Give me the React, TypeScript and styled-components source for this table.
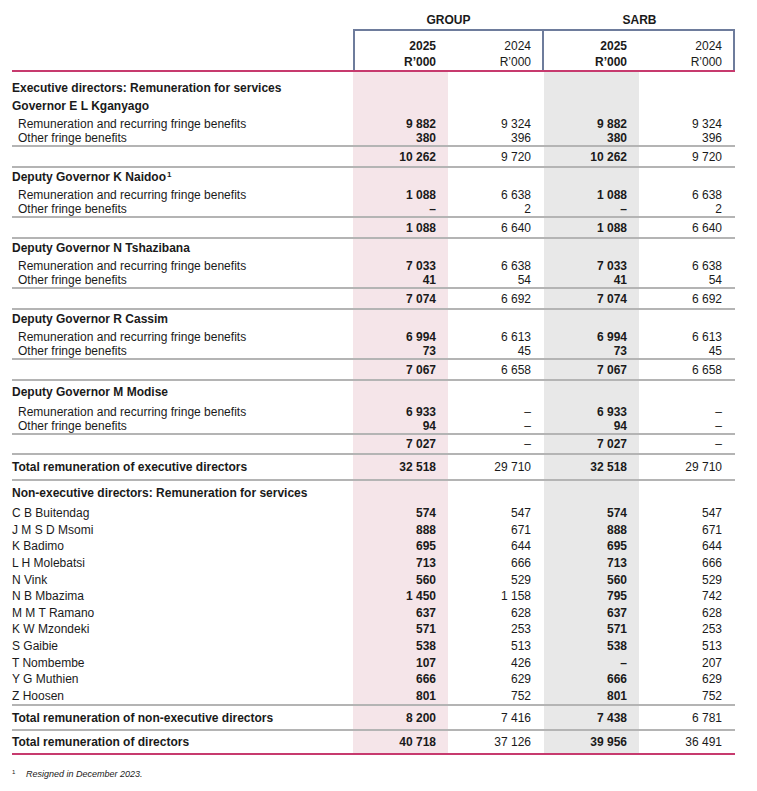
import React from 'react';
import styled, { createGlobalStyle } from 'styled-components';

const GlobalStyle = createGlobalStyle`
  html, body { margin: 0; padding: 0; background: #ffffff; }
  body {
    font-family: "Liberation Sans", Arial, Helvetica, sans-serif;
    color: #1a1a1a;
    font-size: 12px;
  }
`;

const COLS = '341px 95px 96px 95px 96px';

type Tone = 'pink' | 'grey' | 'none';
type Rule = 'grey' | 'pink' | undefined;

const Page = styled.div`
  padding-left: 12px;
  width: 723px;
`;

const Row = styled.div<{ $h: number; $rule?: Rule }>`
  display: grid;
  grid-template-columns: ${COLS};
  height: ${(p) => p.$h}px;
  border-bottom: ${(p) =>
    p.$rule === 'grey' ? '2px solid #b4b4b4' : p.$rule === 'pink' ? '2px solid #c73a6e' : 'none'};
`;

const GroupLabel = styled.div<{ $span: string }>`
  grid-column: ${(p) => p.$span};
  display: flex;
  align-items: center;
  justify-content: center;
  padding-top: 10px;
  font-weight: 700;
  font-size: 12px;
`;

const YearCell = styled.div<{ $bold: boolean; $left?: boolean; $right?: boolean; $pr: number }>`
  display: flex;
  flex-direction: column;
  justify-content: flex-end;
  align-items: flex-end;
  border-top: 2px solid #6e7c9c;
  border-left: ${(p) => (p.$left ? '2px solid #6e7c9c' : 'none')};
  border-right: ${(p) => (p.$right ? '2px solid #6e7c9c' : 'none')};
  padding-right: ${(p) => p.$pr}px;
  font-weight: ${(p) => (p.$bold ? 700 : 400)};
  line-height: 16px;
`;

const Label = styled.div<{ $bold?: boolean; $indent?: number; $padTop?: number }>`
  display: flex;
  align-items: center;
  padding-left: ${(p) => p.$indent ?? 0}px;
  padding-top: ${(p) => p.$padTop ?? 0}px;
  font-weight: ${(p) => (p.$bold ? 700 : 400)};
  white-space: nowrap;
  sup {
    font-size: 8px;
    line-height: 0;
    margin-left: 1px;
    position: relative;
    top: -2px;
  }
`;

const Value = styled.div<{ $tone: Tone; $bold: boolean; $pr: number; $padTop?: number }>`
  display: flex;
  align-items: center;
  justify-content: flex-end;
  padding-right: ${(p) => p.$pr}px;
  padding-top: ${(p) => p.$padTop ?? 0}px;
  font-weight: ${(p) => (p.$bold ? 700 : 400)};
  background: ${(p) => (p.$tone === 'pink' ? '#f5e5e9' : p.$tone === 'grey' ? '#e8e8e8' : 'transparent')};
`;

const Footnote = styled.div`
  display: flex;
  align-items: flex-start;
  margin-top: 13px;
  padding-left: 12px;
  font-size: 9px;
  line-height: 12px;
`;

const FootMark = styled.span`
  font-size: 6px;
  line-height: 8px;
  width: 14px;
`;

const FootText = styled.span`
  font-style: italic;
`;

const COLSPEC: { tone: Tone; bold: boolean; pr: number }[] = [
  { tone: 'pink', bold: true, pr: 12 },
  { tone: 'none', bold: false, pr: 13 },
  { tone: 'grey', bold: true, pr: 12 },
  { tone: 'none', bold: false, pr: 13 },
];

type RowProps = {
  h: number;
  label?: React.ReactNode;
  values?: string[];
  bold?: boolean;
  indent?: number;
  padTop?: number;
  rule?: Rule;
};

function DataRow({ h, label, values, bold, indent, padTop, rule }: RowProps) {
  return (
    <Row $h={h} $rule={rule}>
      <Label $bold={bold} $indent={indent} $padTop={padTop}>
        {label}
      </Label>
      {COLSPEC.map((c, i) => (
        <Value key={i} $tone={c.tone} $bold={c.bold} $pr={c.pr} $padTop={padTop}>
          {values ? values[i] : ''}
        </Value>
      ))}
    </Row>
  );
}

type Section = {
  name: React.ReactNode;
  remun: string[];
  other: string[];
  total: string[];
  headH?: number;
  headPad?: number;
  gap?: number;
  totalH?: number;
};

const sections: Section[] = [
  {
    name: 'Governor E L Kganyago',
    remun: ['9 882', '9 324', '9 882', '9 324'],
    other: ['380', '396', '380', '396'],
    total: ['10 262', '9 720', '10 262', '9 720'],
  },
  {
    name: (
      <>
        Deputy Governor K Naidoo<sup>1</sup>
      </>
    ),
    remun: ['1 088', '6 638', '1 088', '6 638'],
    other: ['–', '2', '–', '2'],
    total: ['1 088', '6 640', '1 088', '6 640'],
  },
  {
    name: 'Deputy Governor N Tshazibana',
    remun: ['7 033', '6 638', '7 033', '6 638'],
    other: ['41', '54', '41', '54'],
    total: ['7 074', '6 692', '7 074', '6 692'],
  },
  {
    name: 'Deputy Governor R Cassim',
    remun: ['6 994', '6 613', '6 994', '6 613'],
    other: ['73', '45', '73', '45'],
    total: ['7 067', '6 658', '7 067', '6 658'],
  },
  {
    name: 'Deputy Governor M Modise',
    remun: ['6 933', '–', '6 933', '–'],
    other: ['94', '–', '94', '–'],
    total: ['7 027', '–', '7 027', '–'],
    headH: 19,
    headPad: 2,
    gap: 5,
    totalH: 18,
  },
];

const nonExec: [string, string[]][] = [
  ['C B Buitendag', ['574', '547', '574', '547']],
  ['J M S D Msomi', ['888', '671', '888', '671']],
  ['K Badimo', ['695', '644', '695', '644']],
  ['L H Molebatsi', ['713', '666', '713', '666']],
  ['N Vink', ['560', '529', '560', '529']],
  ['N B Mbazima', ['1 450', '1 158', '795', '742']],
  ['M M T Ramano', ['637', '628', '637', '628']],
  ['K W Mzondeki', ['571', '253', '571', '253']],
  ['S Gaibie', ['538', '513', '538', '513']],
  ['T Nombembe', ['107', '426', '–', '207']],
  ['Y G Muthien', ['666', '629', '666', '629']],
  ['Z Hoosen', ['801', '752', '801', '752']],
];

function ExecSection({ s }: { s: Section }) {
  return (
    <>
      <DataRow h={s.headH ?? 17} label={s.name} bold padTop={s.headPad} />
      <DataRow h={s.gap ?? 3} />
      <DataRow h={14} indent={6} label="Remuneration and recurring fringe benefits" values={s.remun} />
      <DataRow h={14} indent={6} label="Other fringe benefits" values={s.other} rule="grey" />
      <DataRow h={s.totalH ?? 19} values={s.total} rule="grey" />
    </>
  );
}

export default function App() {
  return (
    <>
      <GlobalStyle />
      <Page>
        <Row $h={29}>
          <div />
          <GroupLabel $span="2 / 4">GROUP</GroupLabel>
          <GroupLabel $span="4 / 6">SARB</GroupLabel>
        </Row>
        <Row $h={41} $rule="pink">
          <div />
          <YearCell $bold $left $pr={12}>
            <span>2025</span>
            <span>R’000</span>
          </YearCell>
          <YearCell $bold={false} $right $pr={11}>
            <span>2024</span>
            <span>R’000</span>
          </YearCell>
          <YearCell $bold $pr={12}>
            <span>2025</span>
            <span>R’000</span>
          </YearCell>
          <YearCell $bold={false} $right $pr={11}>
            <span>2024</span>
            <span>R’000</span>
          </YearCell>
        </Row>
        <DataRow h={25} padTop={7} bold label="Executive directors: Remuneration for services" />
        {sections.map((s, i) => (
          <ExecSection key={i} s={s} />
        ))}
        <DataRow
          h={24}
          bold
          label="Total remuneration of executive directors"
          values={['32 518', '29 710', '32 518', '29 710']}
          rule="grey"
        />
        <DataRow h={24} bold label="Non-executive directors: Remuneration for services" />
        {nonExec.map(([name, vals], i) => (
          <DataRow
            key={name}
            h={16.6}
            label={name}
            values={vals}
            rule={i === nonExec.length - 1 ? 'grey' : undefined}
          />
        ))}
        <DataRow
          h={23}
          bold
          label="Total remuneration of non-executive directors"
          values={['8 200', '7 416', '7 438', '6 781']}
          rule="grey"
        />
        <DataRow
          h={22}
          bold
          label="Total remuneration of directors"
          values={['40 718', '37 126', '39 956', '36 491']}
          rule="pink"
        />
      </Page>
      <Footnote>
        <FootMark>1</FootMark>
        <FootText>Resigned in December 2023.</FootText>
      </Footnote>
    </>
  );
}
